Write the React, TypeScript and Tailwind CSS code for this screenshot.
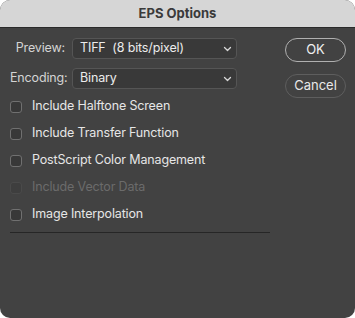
import React from "react";

function Chevron() {
  return (
    <svg width="9" height="6" viewBox="0 0 9 6" className="shrink-0">
      <path d="M1.5 1.5 L4.5 4.5 L7.5 1.5" fill="none" stroke="#d8d8d8" strokeWidth="1.3" strokeLinecap="round" strokeLinejoin="round" />
    </svg>
  );
}

function Select({ value }: { value: string }) {
  return (
    <div className="flex h-[21px] w-[165px] items-center justify-between rounded-[4px] border border-[#555555] bg-[#393939] pl-[7px] pr-[4px] text-[12.5px] tracking-[-0.15px] text-[#ececec]">
      <span className="whitespace-pre">{value}</span>
      <Chevron />
    </div>
  );
}

function Check({ label, disabled }: { label: string; disabled?: boolean }) {
  return (
    <div className="flex h-[27px] items-center">
      <div
        className={
          disabled
            ? "h-[12px] w-[12px] rounded-[3px] border border-[#4a4a4a] bg-[#3e3e3e]"
            : "h-[12px] w-[12px] rounded-[3px] border border-[#707070] bg-[#383838]"
        }
      />
      <span
        className={
          disabled
            ? "ml-[10px] text-[12.5px] tracking-[-0.15px] text-[#6b6b6b]"
            : "ml-[10px] text-[12.5px] tracking-[-0.15px] text-[#e6e6e6]"
        }
      >
        {label}
      </span>
    </div>
  );
}

export default function App() {
  return (
    <div className="h-[318px] w-[355px] bg-white" style={{ fontFamily: "Inter, 'Noto Sans', sans-serif" }}>
      <div className="flex h-full w-full flex-col overflow-hidden rounded-[10px] bg-[#424242]">
        <div className="flex h-[28px] shrink-0 items-center justify-center border-b border-[#2a2a2a] bg-[#d6d6d6]">
          <span className="text-[13px] font-bold text-[#3a3a3a]">EPS Options</span>
        </div>
        <div className="flex pl-[10px] pr-[9px] pt-[10px]">
          <div className="flex w-[260px] flex-col">
            <div className="flex items-center gap-[7px]">
              <span className="w-[55px] text-right text-[12.5px] tracking-[-0.15px] text-[#d4d4d4]">Preview:</span>
              <Select value="TIFF  (8 bits/pixel)" />
            </div>
            <div className="mt-[9px] flex items-center gap-[7px]">
              <span className="w-[55px] text-right text-[12.5px] tracking-[-0.15px] text-[#d4d4d4]">Encoding:</span>
              <Select value="Binary" />
            </div>
            <div className="mt-[4px] flex flex-col">
              <Check label="Include Halftone Screen" />
              <Check label="Include Transfer Function" />
              <Check label="PostScript Color Management" />
              <Check label="Include Vector Data" disabled />
              <Check label="Image Interpolation" />
            </div>
            <div className="mt-[4px] h-px w-[260px] bg-[#262626]" />
          </div>
          <div className="ml-auto flex flex-col gap-[12px]">
            <div className="flex h-[24px] w-[61px] items-center justify-center rounded-full border border-[#b0b0b0] text-[13px] text-[#f0f0f0]">
              OK
            </div>
            <div className="flex h-[24px] w-[61px] items-center justify-center rounded-full border border-[#5e5e5e] text-[13px] text-[#e8e8e8]">
              Cancel
            </div>
          </div>
        </div>
      </div>
    </div>
  );
}
